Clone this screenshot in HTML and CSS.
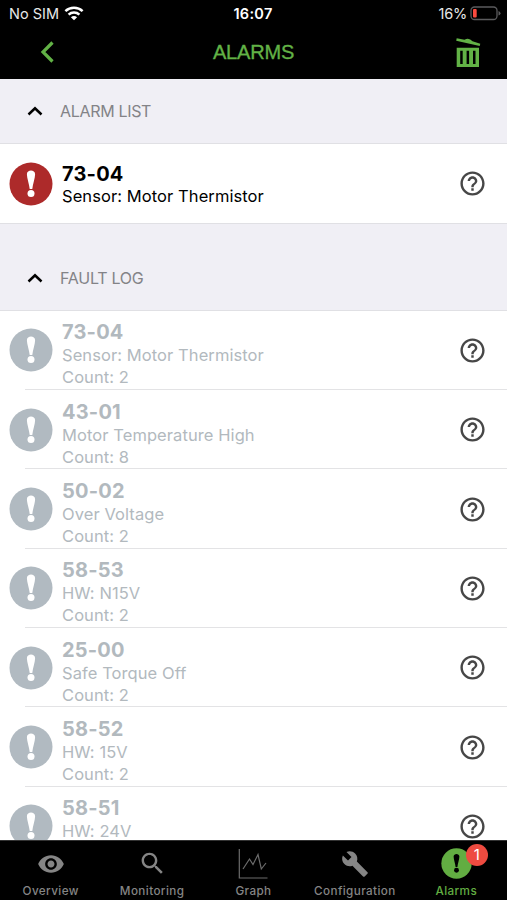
FILE: index.html
```html
<!DOCTYPE html>
<html lang="en">
<head>
<meta charset="utf-8">
<title>Alarms</title>
<link rel="stylesheet" href="styles.css">
</head>
<body>
<svg class="defs" width="0" height="0">
  <symbol id="bang" viewBox="0 0 44 44"><circle cx="22" cy="22" r="21.5" fill="currentColor"/><path class="mark" d="M17.900 12.200C17.900 7.200 26.100 7.200 26.100 12.200C26.100 16 23.800 22 23.300 27H20.700C20.200 22 17.900 16 17.900 12.200Z"/><circle class="mark" cx="22" cy="31.500" r="3.500"/></symbol>
  <symbol id="help" viewBox="0 0 24 24"><path fill="currentColor" d="M11 18h2v-2h-2v2zm1-16C6.48 2 2 6.480 2 12s4.480 10 10 10 10-4.480 10-10S17.520 2 12 2zm0 18c-4.410 0-8-3.590-8-8s3.590-8 8-8 8 3.590 8 8-3.590 8-8 8zm0-14c-2.210 0-4 1.790-4 4h2c0-1.100.9-2 2-2s2 .9 2 2c0 2-3 1.750-3 5h2c0-2.250 3-2.500 3-5 0-2.210-1.790-4-4-4z"/></symbol>
  <symbol id="up" viewBox="0 0 16 10"><path d="M1.500 8.500L8 2.300L14.500 8.500" fill="none" stroke="currentColor" stroke-width="2.500"/></symbol>
</svg>
<div class="app">
  <header>
    <div class="status">
      <div class="carrier"><span>No SIM</span>
        <svg width="20" height="15" viewBox="0 0 20 15" fill="none" stroke="#fff" stroke-width="2.500"><path d="M1.400 5.200C6.200.7 13.800.7 18.600 5.200M4.600 8.600C7.600 5.800 12.400 5.800 15.400 8.600"/><path d="M10 14.300L6.900 11.200Q10 8.700 13.100 11.200Z" fill="#fff" stroke="none"/></svg>
      </div>
      <div class="clock">16:07</div>
      <div class="power"><span>16%</span>
        <svg width="31" height="15" viewBox="0 0 31 15"><rect x="1" y="1" width="26" height="12.500" rx="3.500" fill="none" stroke="#5b5b5d" stroke-width="1.300"/><rect x="3" y="3" width="3.700" height="8.500" rx="1" fill="#fb4a3e"/><path d="M28.500 5v4.600q2-.7 2-2.300t-2-2.300z" fill="#5b5b5d"/></svg>
      </div>
    </div>
    <div class="nav">
      <svg class="back" width="15" height="22" viewBox="0 0 15 22"><path d="M13.500 1.500L4 11L13.500 20.500" fill="none" stroke="currentColor" stroke-width="3.200"/></svg>
      <h1>ALARMS</h1>
      <svg class="trash" width="26" height="31" viewBox="0 0 26 31"><path d="M1.700.2L9.500 1.700Q14-1 17.500 3.300L25.300 5.700L24.700 8.100L1.200 2.700Z" fill="currentColor"/><path d="M1.700 9.700H24V29H1.700ZM5.200 12.700V26H7.700V12.700ZM11.600 12.700V26H14.100V12.700ZM18 12.700V26H20.500V12.700Z" fill="currentColor" fill-rule="evenodd"/></svg>
    </div>
  </header>
  <main>
    <h2 class="section first"><svg width="16" height="10"><use href="#up"/></svg><span>ALARM LIST</span></h2>
    <article class="row active"><svg class="alert"><use href="#bang"/></svg><div class="info"><h3>73-04</h3><p>Sensor: Motor Thermistor</p></div><svg class="help"><use href="#help"/></svg></article>
    <h2 class="section second"><svg width="16" height="10"><use href="#up"/></svg><span>FAULT LOG</span></h2>
    <article class="row"><svg class="alert"><use href="#bang"/></svg><div class="info"><h3>73-04</h3><p>Sensor: Motor Thermistor</p><p>Count: 2</p></div><svg class="help"><use href="#help"/></svg></article>
    <article class="row"><svg class="alert"><use href="#bang"/></svg><div class="info"><h3>43-01</h3><p>Motor Temperature High</p><p>Count: 8</p></div><svg class="help"><use href="#help"/></svg></article>
    <article class="row"><svg class="alert"><use href="#bang"/></svg><div class="info"><h3>50-02</h3><p>Over Voltage</p><p>Count: 2</p></div><svg class="help"><use href="#help"/></svg></article>
    <article class="row"><svg class="alert"><use href="#bang"/></svg><div class="info"><h3>58-53</h3><p>HW: N15V</p><p>Count: 2</p></div><svg class="help"><use href="#help"/></svg></article>
    <article class="row"><svg class="alert"><use href="#bang"/></svg><div class="info"><h3>25-00</h3><p>Safe Torque Off</p><p>Count: 2</p></div><svg class="help"><use href="#help"/></svg></article>
    <article class="row"><svg class="alert"><use href="#bang"/></svg><div class="info"><h3>58-52</h3><p>HW: 15V</p><p>Count: 2</p></div><svg class="help"><use href="#help"/></svg></article>
    <article class="row"><svg class="alert"><use href="#bang"/></svg><div class="info"><h3>58-51</h3><p>HW: 24V</p></div><svg class="help"><use href="#help"/></svg></article>
  </main>
  <nav class="tabs">
    <div class="tab"><div class="icon"><svg width="28" height="28" viewBox="0 0 24 24"><path fill="currentColor" d="M12 4.500C7 4.500 2.730 7.610 1 12c1.730 4.390 6 7.500 11 7.500s9.270-3.110 11-7.500c-1.730-4.390-6-7.500-11-7.500zM12 17c-2.760 0-5-2.240-5-5s2.240-5 5-5 5 2.240 5 5-2.240 5-5 5zm0-8c-1.660 0-3 1.340-3 3s1.340 3 3 3 3-1.340 3-3-1.340-3-3-3z"/></svg></div><span>Overview</span></div>
    <div class="tab"><div class="icon"><svg width="29" height="29" viewBox="0 0 24 24"><path fill="currentColor" d="M15.500 14h-.79l-.28-.27C15.410 12.590 16 11.110 16 9.500 16 5.910 13.090 3 9.500 3S3 5.910 3 9.500 5.910 16 9.500 16c1.610 0 3.090-.59 4.230-1.570l.27.28v.79l5 4.990L20.490 19l-4.990-5zm-6 0C7.010 14 5 11.990 5 9.500S7.010 5 9.500 5 14 7.010 14 9.500 11.990 14 9.500 14z"/></svg></div><span>Monitoring</span></div>
    <div class="tab"><div class="icon"><svg class="chart" width="30" height="32" viewBox="0 0 30 32" fill="none" stroke="currentColor" stroke-width="1.200"><path d="M1.300 1V30H29.500M5 21L11.500 11L15 16.500L20 6.500L23.300 21L28 15"/></svg></div><span>Graph</span></div>
    <div class="tab"><div class="icon"><svg width="28" height="28" viewBox="0 0 24 24"><path fill="currentColor" d="M22.700 19l-9.100-9.100c.9-2.300.4-5-1.500-6.900-2-2-5-2.400-7.400-1.300L9 6 6 9 1.600 4.700C.4 7.100.9 10.100 2.900 12.100c1.900 1.900 4.600 2.400 6.900 1.500l9.100 9.100c.4.4 1 .4 1.400 0l2.300-2.300c.5-.4.5-1.100.1-1.400z"/></svg></div><span>Configuration</span></div>
    <div class="tab selected"><div class="icon"><svg class="tabbang"><use href="#bang"/></svg><b class="badge">1</b></div><span>Alarms</span></div>
  </nav>
</div>
</body>
</html>
```

FILE: styles.css
```css
* { box-sizing: border-box; }
body { margin: 0; font-family: Inter, "Liberation Sans", sans-serif; background: #fff; }
h1, h2, h3, p { margin: 0; }
svg { display: block; flex: none; }
.defs { position: absolute; }
.app { width: 507px; height: 900px; display: flex; flex-direction: column; overflow: hidden; }
header { height: 79px; flex: none; background: #000; color: #62b246; }
.status { height: 27px; display: grid; grid-template-columns: 1fr auto 1fr; align-items: center; padding: 0 6px 0 9px; color: #e8e8e8; font-size: 14.5px; }
.carrier, .power { display: flex; align-items: center; gap: 5px; }
.carrier { letter-spacing: 0; }
.power { justify-content: flex-end; gap: 3px; letter-spacing: -.25px; }
.clock { font-weight: 600; font-size: 14.5px; color: #fff; letter-spacing: .3px; margin: 0 3px 0 -1px; }
.nav { height: 50px; display: grid; grid-template-columns: 1fr auto 1fr; align-items: center; padding: 0 26px 0 39px; }
.nav h1 { font: 400 20px/24px "Liberation Sans", sans-serif; letter-spacing: -.2px; -webkit-text-stroke: .35px; margin-left: -13px; }
.trash { justify-self: end; margin-top: 2px; }
main { flex: 1; min-height: 0; overflow: hidden; background: #fff; }
.section { display: flex; align-items: center; gap: 17px; padding-left: 27px; background: #f0eff5; color: #838387; font-size: 16px; font-weight: 400; letter-spacing: -.32px; border-bottom: 1px solid #e0e0e4; }
.section svg { color: #000; }
.first { height: 65px; }
.second { height: 87.700px; padding-top: 22px; border-top: 1px solid #e0e0e4; }
.second span { letter-spacing: -.25px; }
.row { --mark: #fff; height: 79.350px; display: flex; align-items: center; padding: 0 20px 0 9px; position: relative; color: #b2b9be; }
.row:not(.active)::after { content: ""; position: absolute; left: 25px; right: 0; bottom: 0; height: 1px; background: #e3e3e5; }
.active { height: 79px; color: #000; }
.alert { width: 44px; height: 44px; color: #b1bac1; }
.active .alert { color: #ad2a2a; }
.mark { fill: var(--mark); }
.info { margin-left: 9px; flex: 1; height: 100%; padding-top: 9.500px; }
.info h3 { font-size: 20px; line-height: 24px; font-weight: 700; letter-spacing: .2px; }
.info p { font-size: 16.500px; line-height: 22px; letter-spacing: .08px; }
.active .info { padding-top: 19px; }
.active .info h3 { line-height: 22px; }
.help { width: 29px; height: 29px; color: #474747; }
.tabs { height: 60px; flex: none; background: #000; display: grid; grid-template-columns: repeat(5, 1fr); color: #858585; border-top: 1px solid #333; }
.tab { display: flex; flex-direction: column; align-items: center; font-size: 11.700px; font-weight: 500; letter-spacing: .4px; }
.icon { height: 43px; display: flex; align-items: center; position: relative; padding-top: 2px; }
.chart { color: #6c6c6c; }
.tab span { line-height: 14px; }
.selected { --mark: #000; color: #62ad42; }
.tabbang { width: 31px; height: 31px; }
.badge { position: absolute; left: 25px; top: 3px; width: 22px; height: 22px; border-radius: 50%; background: #ee4b40; color: #fff; font-size: 15px; line-height: 22px; font-weight: 400; text-align: center; letter-spacing: 0; }
```
